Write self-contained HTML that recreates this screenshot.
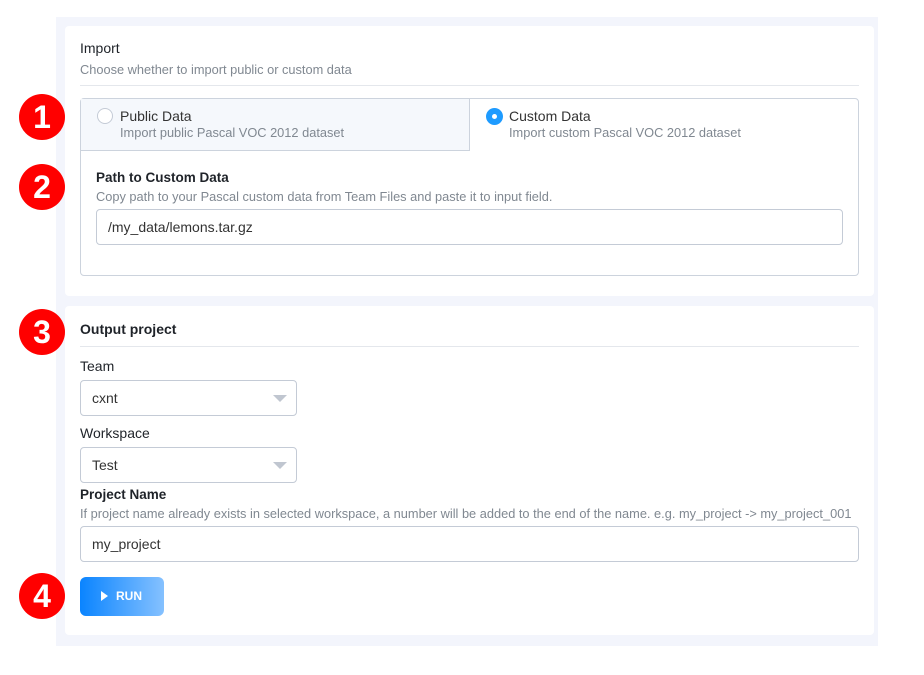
<!DOCTYPE html><html><head><style>
body{margin:0;width:924px;height:675px;background:#fff;font-family:"Liberation Sans",sans-serif;position:relative;overflow:hidden}
.a{position:absolute}
.bg{left:56px;top:17px;width:822px;height:629px;background:#f3f5fc}
.card{background:#fff;border-radius:4px;left:65px;width:809px}
.t{font-size:14px;color:#1f2329}
.s{font-size:12.8px;color:#808891}
.badge{width:46px;height:46px;border-radius:50%;background:#f00;color:#fff;font-weight:bold;font-size:32px;text-align:center;line-height:46px;left:19px}
.inp{border:1px solid #c4cbd6;border-radius:4px;background:#fff;font-size:14px;color:#333;box-sizing:border-box;padding-left:11px}
.arr{width:0;height:0;border-left:7px solid transparent;border-right:7px solid transparent;border-top:7px solid #c0c6d0}
</style></head><body>
<div class="a bg"></div>
<div class="a card" style="top:26px;height:270px"></div>
<div class="a card" style="top:306px;height:329px"></div>
<div class="a t" style="left:80px;top:40px">Import</div>
<div class="a s" style="left:80px;top:62px">Choose whether to import public or custom data</div>
<div class="a" style="left:80px;top:85px;width:779px;height:1px;background:#e4e7ec"></div>
<div class="a" style="left:80px;top:98px;width:777px;height:176px;border:1px solid #ccd3dd;border-radius:4px"></div>
<div class="a" style="left:81px;top:99px;width:388px;height:51px;background:#f5f8fc;border-right:1px solid #ccd3dd;border-bottom:1px solid #ccd3dd"></div>
<div class="a" style="left:97px;top:108px;width:16px;height:16px;border:1px solid #c4cbd6;border-radius:50%;background:#fff;box-sizing:border-box"></div>
<div class="a t" style="left:120px;top:108px;color:#333">Public Data</div>
<div class="a s" style="left:120px;top:125px">Import public Pascal VOC 2012 dataset</div>
<div class="a" style="left:486px;top:108px;width:17px;height:17px;border-radius:50%;background:#1e9bff"></div>
<div class="a" style="left:492px;top:114px;width:5px;height:5px;border-radius:50%;background:#fff"></div>
<div class="a t" style="left:509px;top:108px;color:#333">Custom Data</div>
<div class="a s" style="left:509px;top:125px">Import custom Pascal VOC 2012 dataset</div>
<div class="a t" style="left:96px;top:170px;font-weight:bold;font-size:13.5px">Path to Custom Data</div>
<div class="a s" style="left:96px;top:189px">Copy path to your Pascal custom data from Team Files and paste it to input field.</div>
<div class="a inp" style="left:96px;top:209px;width:747px;height:36px;line-height:34px">/my_data/lemons.tar.gz</div>
<div class="a t" style="left:80px;top:321px;font-weight:bold">Output project</div>
<div class="a" style="left:80px;top:346px;width:779px;height:1px;background:#e4e7ec"></div>
<div class="a t" style="left:80px;top:358px">Team</div>
<div class="a inp" style="left:80px;top:380px;width:217px;height:36px;line-height:34px">cxnt</div>
<div class="a arr" style="left:273px;top:395px"></div>
<div class="a t" style="left:80px;top:425px">Workspace</div>
<div class="a inp" style="left:80px;top:447px;width:217px;height:36px;line-height:34px">Test</div>
<div class="a arr" style="left:273px;top:462px"></div>
<div class="a t" style="left:80px;top:487px;font-weight:bold;font-size:13.5px">Project Name</div>
<div class="a s" style="left:80px;top:506px">If project name already exists in selected workspace, a number will be added to the end of the name. e.g. my_project -&gt; my_project_001</div>
<div class="a inp" style="left:80px;top:526px;width:779px;height:36px;line-height:34px">my_project</div>
<div class="a" style="left:80px;top:577px;width:84px;height:39px;border-radius:6px;background:linear-gradient(90deg,#0a84ff,#85c1ff);color:#fff;font-weight:bold;font-size:12px;line-height:39px"><span style="position:absolute;left:21px;top:14px;width:0;height:0;border-top:5px solid transparent;border-bottom:5px solid transparent;border-left:7px solid #fff"></span><span style="position:absolute;left:36px">RUN</span></div>
<div class="a badge" style="top:94px">1</div>
<div class="a badge" style="top:164px">2</div>
<div class="a badge" style="top:309px">3</div>
<div class="a badge" style="top:573px">4</div>
</body></html>
